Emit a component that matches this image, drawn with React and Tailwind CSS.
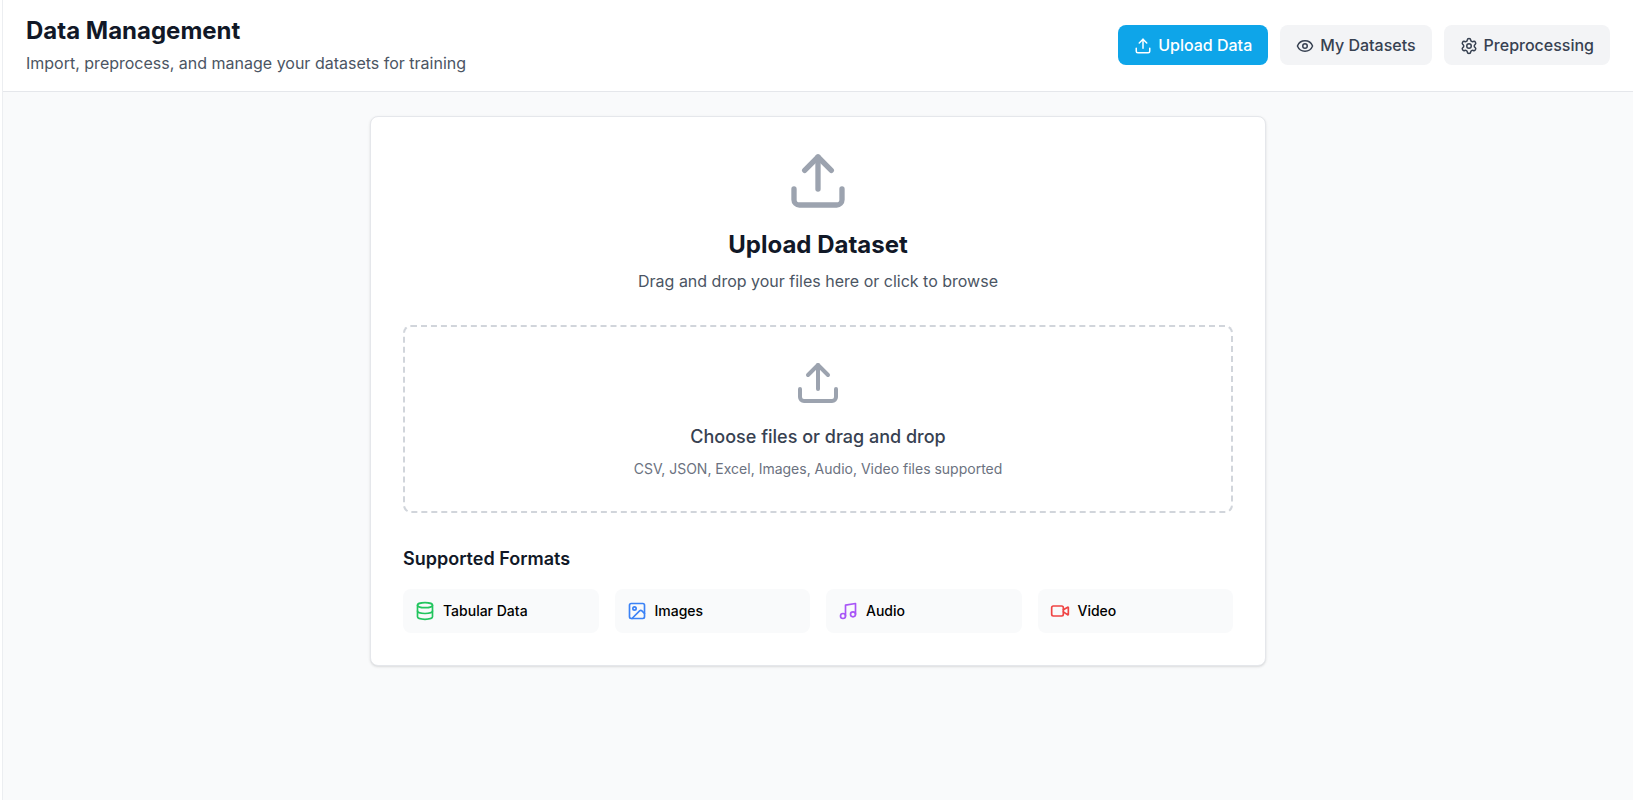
import React from "react";
import { Upload, Eye, Settings, Database, Image, Music, Video } from "lucide-react";

const formats = [
  { icon: Database, color: "text-[#22c55e]", label: "Tabular Data" },
  { icon: Image, color: "text-[#3b82f6]", label: "Images" },
  { icon: Music, color: "text-[#a855f7]", label: "Audio" },
  { icon: Video, color: "text-[#ef4444]", label: "Video" },
];

export default function App() {
  return (
    <div className="h-[800px] overflow-hidden bg-white pl-[2px] font-['Inter',sans-serif]">
      <div className="h-full border-l border-[#eceef1] bg-[#f9fafb]">
        <header className="flex h-[92px] items-center justify-between border-b border-[#e5e7eb] bg-white pb-[2px] pl-[23px] pr-[23px]">
          <div>
            <h1 className="text-2xl font-bold text-[#111827]">Data Management</h1>
            <p className="mt-1 text-base text-[#4b5563]">Import, preprocess, and manage your datasets for training</p>
          </div>
          <div className="flex items-center gap-3">
            <button className="flex h-10 items-center gap-1.5 rounded-lg bg-[#0ea5e9] px-4 font-medium text-white">
              <Upload className="mt-[3px] h-[18px] w-[18px]" />
              Upload Data
            </button>
            <button className="flex h-10 items-center gap-1.5 rounded-lg bg-[#f3f4f6] px-4 font-medium text-[#374151]">
              <Eye className="mt-[3px] h-[18px] w-[18px]" />
              My Datasets
            </button>
            <button className="flex h-10 items-center gap-1.5 rounded-lg bg-[#f3f4f6] px-4 font-medium text-[#374151]">
              <Settings className="mt-[3px] h-[18px] w-[18px]" />
              Preprocessing
            </button>
          </div>
        </header>
        <main className="p-6">
          <div className="mx-auto max-w-4xl rounded-lg border border-[#e5e7eb] bg-white p-8 shadow-sm">
            <div className="mb-8 flex flex-col items-center text-center">
              <Upload className="mb-4 h-16 w-16 text-[#9ca3af]" />
              <h2 className="mb-2 text-2xl font-bold text-[#111827]">Upload Dataset</h2>
              <p className="text-[#4b5563]">Drag and drop your files here or click to browse</p>
            </div>
            <div className="flex flex-col items-center rounded-lg border-2 border-dashed border-[#d1d5db] p-8 text-center">
              <Upload className="mb-4 h-12 w-12 text-[#9ca3af]" />
              <p className="mb-2 text-lg font-medium text-[#374151]">Choose files or drag and drop</p>
              <p className="text-sm text-[#6b7280]">CSV, JSON, Excel, Images, Audio, Video files supported</p>
            </div>
            <div className="mt-8">
              <h4 className="mb-4 text-lg font-semibold text-[#111827]">Supported Formats</h4>
              <div className="grid grid-cols-4 gap-4">
                {formats.map((f) => (
                  <div key={f.label} className="flex items-center gap-2 rounded-lg bg-[#f9fafb] p-3">
                    <f.icon className={`h-5 w-5 ${f.color}`} />
                    <span className="text-sm font-medium text-black">{f.label}</span>
                  </div>
                ))}
              </div>
            </div>
          </div>
        </main>
      </div>
    </div>
  );
}
